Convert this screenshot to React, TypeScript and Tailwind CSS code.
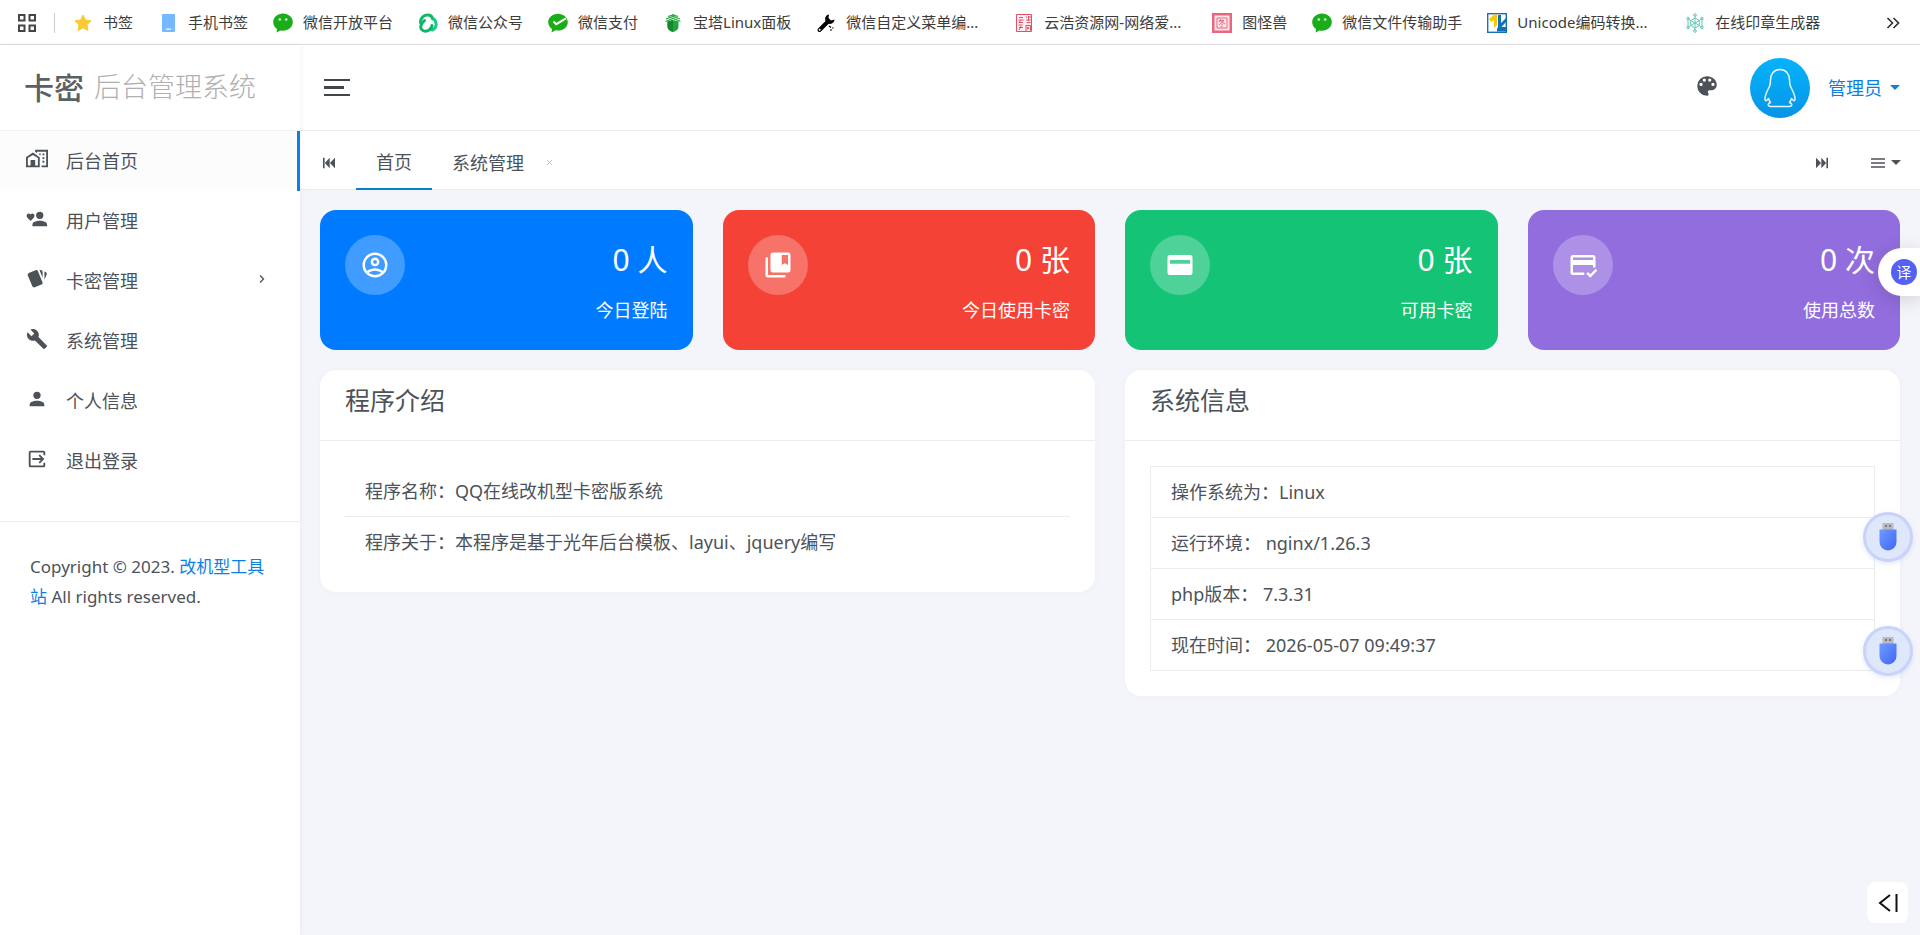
import type { ReactNode } from "react"

// Single-path icons on a 24x24 grid.
const ICONS = {
  cards:
    "M21.47,4.35L20.13,3.79V12.82L22.56,6.96C22.97,5.94 22.5,4.77 21.47,4.35M1.97,8.05L6.93,20C7.24,20.77 7.97,21.24 8.74,21.26C9,21.26 9.27,21.21 9.53,21.1L16.9,18.05C17.65,17.74 18.11,17 18.13,16.26C18.14,16 18.09,15.71 18,15.45L13,3.5C12.71,2.73 11.97,2.26 11.19,2.25C10.93,2.25 10.67,2.31 10.42,2.4L3.06,5.45C2.04,5.87 1.55,7.04 1.97,8.05M18.12,4.25A2,2 0 0,0 16.12,2.25H14.67L18.12,10.59",
  wrench:
    "M22.7,19L13.6,9.9C14.5,7.6 14,4.9 12.1,3C10.1,1 7.1,0.6 4.7,1.7L9,6L6,9L1.6,4.7C0.4,7.1 0.9,10.1 2.9,12.1C4.8,14 7.5,14.5 9.8,13.6L18.9,22.7C19.3,23.1 19.9,23.1 20.3,22.7L22.6,20.4C23.1,20 23.1,19.3 22.7,19Z",
  account:
    "M12,4A4,4 0 0,1 16,8A4,4 0 0,1 12,12A4,4 0 0,1 8,8A4,4 0 0,1 12,4M12,14C16.42,14 20,15.79 20,18V20H4V18C4,15.79 7.58,14 12,14Z",
  accountHeart:
    "M15,4A4,4 0 0,1 19,8A4,4 0 0,1 15,12A4,4 0 0,1 11,8A4,4 0 0,1 15,4M15,14C19.42,14 23,15.79 23,18V20H7V18C7,15.79 10.58,14 15,14M5,14L4.4,13.5C2.2,11.5 0.7,10.2 0.7,8.5C0.7,7.2 1.8,6.1 3.1,6.1C3.8,6.1 4.5,6.4 5,7C5.5,6.4 6.2,6.1 6.9,6.1C8.2,6.1 9.3,7.2 9.3,8.5C9.3,10.2 7.8,11.5 5.6,13.5L5,14Z",
  home:
    "M10,2V4.26L12,5.59V4H22V19H17V21H24V2H10M7.5,5L0,10V21H15V10L7.5,5M14,6V6.93L15.61,8H16V6H14M18,6V8H20V6H18M7.5,7.5L13,11V19H10V13H5V19H2V11L7.5,7.5M18,10V12H20V10H18M18,14V16H20V14H18Z",
  exit:
    "M5,3H19A2,2 0 0,1 21,5V8H19V5H5V19H19V16H21V19A2,2 0 0,1 19,21H5A2,2 0 0,1 3,19V5A2,2 0 0,1 5,3M15.1,7.1L20,12L15.1,16.9L13.7,15.5L16.2,13H7V11H16.2L13.7,8.5Z",
  palette:
    "M17.5,12A1.5,1.5 0 0,1 16,10.5A1.5,1.5 0 0,1 17.5,9A1.5,1.5 0 0,1 19,10.5A1.5,1.5 0 0,1 17.5,12M14.5,8A1.5,1.5 0 0,1 13,6.5A1.5,1.5 0 0,1 14.5,5A1.5,1.5 0 0,1 16,6.5A1.5,1.5 0 0,1 14.5,8M9.5,8A1.5,1.5 0 0,1 8,6.5A1.5,1.5 0 0,1 9.5,5A1.5,1.5 0 0,1 11,6.5A1.5,1.5 0 0,1 9.5,8M6.5,12A1.5,1.5 0 0,1 5,10.5A1.5,1.5 0 0,1 6.5,9A1.5,1.5 0 0,1 8,10.5A1.5,1.5 0 0,1 6.5,12M12,3A9,9 0 0,0 3,12A9,9 0 0,0 12,21A1.5,1.5 0 0,0 13.5,19.5C13.5,19.11 13.35,18.76 13.11,18.5C12.88,18.23 12.73,17.88 12.73,17.5A1.5,1.5 0 0,1 14.23,16H16A5,5 0 0,0 21,11C21,6.58 16.97,3 12,3Z",
  accountCircle:
    "M12,2A10,10 0 0,0 2,12A10,10 0 0,0 12,22A10,10 0 0,0 22,12A10,10 0 0,0 12,2M7.07,18.28C7.5,17.38 10.12,16.5 12,16.5C13.88,16.5 16.5,17.38 16.93,18.28C15.57,19.36 13.86,20 12,20C10.14,20 8.43,19.36 7.07,18.28M18.36,16.83C16.93,15.09 13.46,14.5 12,14.5C10.54,14.5 7.07,15.09 5.64,16.83C4.62,15.5 4,13.82 4,12C4,7.59 7.59,4 12,4C16.41,4 20,7.59 20,12C20,13.82 19.38,15.5 18.36,16.83M12,6C10.06,6 8.5,7.56 8.5,9.5C8.5,11.44 10.06,13 12,13C13.94,13 15.5,11.44 15.5,9.5C15.5,7.56 13.94,6 12,6M12,11A1.5,1.5 0 0,1 10.5,9.5A1.5,1.5 0 0,1 12,8A1.5,1.5 0 0,1 13.5,9.5A1.5,1.5 0 0,1 12,11Z",
  books:
    "M4,6H2V20A2,2 0 0,0 4,22H18V20H4V6M8,2A2,2 0 0,0 6,4V16A2,2 0 0,0 8,18H20A2,2 0 0,0 22,16V4A2,2 0 0,0 20,2H8M15,4H20V12L17.5,10.5L15,12V4Z",
  card:
    "M20,4H4A2,2 0 0,0 2,6V18A2,2 0 0,0 4,20H20A2,2 0 0,0 22,18V6A2,2 0 0,0 20,4M20,11H4V8H20V11Z",
  cardCheck:
    "M4,4H20A2,2 0 0,1 22,6V14H20V12H4V18H13V20H4A2,2 0 0,1 2,18V6A2,2 0 0,1 4,4M4,6V8H20V6H4M17.8,22.2L14.6,19L16,17.6L17.8,19.4L22.2,15L23.4,16.4L17.8,22.2Z",
  skipStart: "M3,4H5.4V20H3V4M13,4V20L5.8,12L13,4M21,4V20L13.4,12L21,4Z",
  skipEnd: "M21,4H18.6V20H21V4M11,4V20L18.2,12L11,4M3,4V20L10.6,12L3,4Z",
}

type IconName = keyof typeof ICONS

function Icon({ name, className }: { name: IconName; className?: string }) {
  return (
    <svg viewBox="0 0 24 24" fill="currentColor" fillRule="evenodd" className={className} aria-hidden>
      <path d={ICONS[name]} />
    </svg>
  )
}

function Caret() {
  return (
    <svg viewBox="0 0 10 5" fill="currentColor" className="h-[5px] w-[10px]" aria-hidden>
      <path d="M0 0H10L5 5Z" />
    </svg>
  )
}

// ---- bookmark favicons ----

const wechat = (
  <svg viewBox="0 0 20 20" className="size-5">
    <path d="M10 .5C4.6.5.2 4.2.2 9c0 3 1.5 5.4 3.8 7L3.6 19.5 7.4 17.4c.8.2 1.7.3 2.600.3 5.400 0 9.800-3.800 9.800-8.700S15.400.5 10 .5Z" fill="#1aad19" />
    <circle cx="6.8" cy="6.5" r="1.3" fill="#d8f5d6" />
    <circle cx="13.2" cy="6.5" r="1.3" fill="#d8f5d6" />
  </svg>
)

const star = (
  <svg viewBox="0 0 20 20" className="size-5">
    <path d="M10 2l2.5 5 5.500.8-4 4 1 5.700-5-2.700-5 2.700 1-5.700-4-4L7.500 7Z" fill="#fcc934" stroke="#fcc934" strokeWidth="1" strokeLinejoin="round" />
  </svg>
)

const phone = (
  <svg viewBox="0 0 20 20" className="size-5">
    <rect x="4" y="1" width="13" height="18" rx="1" fill="#74b9ff" />
    <rect x="8" y="15.5" width="5" height="1.2" fill="#fff" />
  </svg>
)

// Three interlocking arms, each a third of a turn from the last.
const official = (
  <svg viewBox="0 0 20 20" className="size-5" fill="none" strokeWidth="3" strokeLinecap="round">
    <path d="M2.500 9.500C2.500 4.500 6.500 1.500 10.500 2c2.500.3 3.800 2 4.200 4" stroke="#12b76a" />
    <path d="M16 6c3.500 4 2.500 9-1.500 11" stroke="#19c98a" />
    <path d="M14 12.500C13.500 16.500 9 19.500 5 17.500 1.500 15.500 2 11.500 6.500 7.500" stroke="#0fb567" />
  </svg>
)

const pay = (
  <svg viewBox="0 0 20 20" className="size-5">
    <path d="M10 .8C4.600.8.2 4.500.2 9.200c0 2.800 1.500 5.200 3.800 6.700L3.600 19.400l3.800-2.100c.8.200 1.700.3 2.600.3 5.400 0 9.800-3.700 9.800-8.400S15.400.8 10 .8Z" fill="#1aad19" />
    <path d="M5.500 8.500l2.800 2.700L18 5.300" stroke="#fff" strokeWidth="2" fill="none" />
  </svg>
)

const pagoda = (
  <svg viewBox="0 0 20 20" className="size-5">
    <path d="M10 1v2M5 3.500L10 2l5 1.500M3 6l7-2.500L17 6M2.500 8.500L10 5.500l7.500 3" stroke="#20a53a" strokeWidth="1.200" fill="none" />
    <path d="M4.500 8.500L10 7l5.500 1.500V14c0 2.500-2.500 4-5.500 5-3-1-5.500-2.500-5.500-5Z" fill="#20a53a" />
    <path d="M4.500 8.500L10 7v12c-3-1-5.500-2.500-5.500-5Z" fill="#158a2c" />
  </svg>
)

const wrenchMark = (
  <svg viewBox="0 0 20 20" className="size-5">
    <path d="M3.500 17L12 8.500" stroke="#000" strokeWidth="4" strokeLinecap="round" />
    <path d="M9.500 8C8.500 4.500 10 2 13 1.500L12.500 5l2.500 2.500 3.500-1C18.500 9.500 15.500 12 12 10.500Z" fill="#000" />
    <circle cx="3.700" cy="16.800" r="1" fill="#fff" />
    <path d="M13 13l2 1.500M16.500 14.500l.8.800M14 17h2" stroke="#000" strokeWidth="1.200" />
  </svg>
)

const redSeal = (
  <svg viewBox="0 0 20 20" className="size-5" fill="none" stroke="#e0506a">
    <path d="M2.500 1.500h15v17h-15Z" fill="#fdeef1" />
    <path d="M5 4.500h4M4.500 7h5M7 7L5 9.500h4M12 3.500l1 1.500M14 4h3M12 7h5M14.500 3v5M12.500 9.500h4M4.500 12h4M5 14.500h4M5 17l2-4M11.500 12.500h5v5M12 13v5M13 14l2 2.500M15 14l-2 2.500" />
  </svg>
)

const redBox = (
  <svg viewBox="0 0 20 20" className="size-5" fill="none">
    <rect width="20" height="20" fill="#e8677c" />
    <rect x="2.500" y="2.500" width="15" height="15" fill="#fde6ea" />
    <path d="M5 5h10v10H5ZM8.500 6L7 9M8 7.500h4L7 12M8.500 8.500L13 11M9.500 11.500l1.500.7M8.500 13.300l2 .7" stroke="#e8677c" strokeWidth="1" />
  </svg>
)

const unicode = (
  <svg viewBox="0 0 20 20" className="size-5">
    <rect x=".7" y=".7" width="18.600" height="18.600" fill="#fff" stroke="#1272b5" strokeWidth="1.400" />
    <path d="M2 6l5-4.500h3V12l-3 3V7L4 9Z" fill="#f9c80e" />
    <path d="M11 9V2h3v8l5-5v4L14.500 14H19v4.500h-9V16l1-2Z" fill="#1272b5" />
  </svg>
)

const snow = (
  <svg viewBox="0 0 20 20" className="size-5" fill="none" stroke="#66c9b8" strokeWidth="1">
    <path d="M10 5l4.300 2.500v5L10 15l-4.300-2.500v-5ZM10 5v10M5.700 7.500l8.600 5M14.300 7.500l-8.600 5M5.700 7.500L3 5.500M14.300 7.500L17 5.500M5.700 12.500L3 14.500M14.300 12.500l2.700 2M10 5V2M10 15v3M3 5.500v9M17 5.500v9" />
    <circle cx="10" cy="2" r="1.300" />
    <circle cx="10" cy="18" r="1.300" />
    <circle cx="3" cy="5.500" r="1.300" />
    <circle cx="17" cy="5.500" r="1.300" />
    <circle cx="3" cy="14.500" r="1.300" />
    <circle cx="17" cy="14.500" r="1.300" />
  </svg>
)

const BOOKMARKS: { icon: ReactNode; label: string; clipped?: boolean }[] = [
  { icon: star, label: "书签" },
  { icon: phone, label: "手机书签" },
  { icon: wechat, label: "微信开放平台" },
  { icon: official, label: "微信公众号" },
  { icon: pay, label: "微信支付" },
  { icon: pagoda, label: "宝塔Linux面板" },
  { icon: wrenchMark, label: "微信自定义菜单编...", clipped: true },
  { icon: redSeal, label: "云浩资源网-网络爱...", clipped: true },
  { icon: redBox, label: "图怪兽" },
  { icon: wechat, label: "微信文件传输助手" },
  { icon: unicode, label: "Unicode编码转换...", clipped: true },
  { icon: snow, label: "在线印章生成器" },
]

function BookmarkBar() {
  return (
    <nav className="flex h-[45px] items-center border-b border-[#dcdcdc] bg-white pt-px pr-5 pl-[18px] text-[15px] text-[#3c3c3c]">
      <button type="button" aria-label="应用" className="text-[#444]">
        <svg viewBox="0 0 18 18" className="size-[18px]" fill="none" stroke="currentColor" strokeWidth="2">
          <path d="M1 1h5.500v5.500H1ZM11.500 1H17v5.500h-5.500ZM1 11.500h5.500V17H1ZM11.500 11.500H17V17h-5.500Z" />
        </svg>
      </button>
      <span className="mx-[18px] h-5 w-px bg-[#ccc]" />
      <ul className="flex min-w-0 flex-1 items-center gap-[25px] overflow-hidden">
        {BOOKMARKS.map((b) => (
          <li key={b.label} className="shrink-0">
            <a href="#" className="flex items-center gap-[10px] whitespace-nowrap">
              {b.icon}
              <span className={b.clipped ? "w-[143px]" : ""}>{b.label}</span>
            </a>
          </li>
        ))}
      </ul>
      <button type="button" aria-label="更多书签" className="text-[#333]">
        <svg viewBox="0 0 14 12" className="h-3 w-[14px]" fill="none" stroke="currentColor" strokeWidth="1.700">
          <path d="M1.500 1l5 5-5 5M7.500 1l5 5-5 5" />
        </svg>
      </button>
    </nav>
  )
}

const MENU: { icon: IconName; label: string; active?: boolean; nested?: boolean }[] = [
  { icon: "home", label: "后台首页", active: true },
  { icon: "accountHeart", label: "用户管理" },
  { icon: "cards", label: "卡密管理", nested: true },
  { icon: "wrench", label: "系统管理" },
  { icon: "account", label: "个人信息" },
  { icon: "exit", label: "退出登录" },
]

function Sidebar() {
  return (
    <aside className="z-10 w-[300px] shrink-0 bg-white shadow-[0_0_6px_rgba(0,0,0,0.06)]">
      <a href="#" className="flex h-[86px] items-center gap-[10px] border-b border-[#f0f0f0] px-6">
        <span className="text-[30px] font-medium text-[#5c5f63]">卡密</span>
        <span className="text-[27px] font-light text-[#b0b0b0]">后台管理系统</span>
      </a>
      <ul>
        {MENU.map((m) => (
          <li key={m.label}>
            <a
              href="#"
              className={
                "flex h-[60px] items-center gap-[18px] border-r-[3px] pr-8 pl-[26px] text-lg " +
                (m.active ? "border-[#0a7fe6] bg-[#fcfcfd]" : "border-transparent")
              }
            >
              <Icon name={m.icon} className="mb-1 size-[22px]" />
              <span className="flex-1">{m.label}</span>
              {m.nested && (
                <svg viewBox="0 0 6 8" className="mb-1 h-2 w-[6px]" fill="none" stroke="currentColor" strokeWidth="1.300">
                  <path d="M1 .5L4.500 4 1 7.500" />
                </svg>
              )}
            </a>
          </li>
        ))}
      </ul>
      <p className="mt-[30px] border-t border-[#ececec] px-[30px] py-[30px] text-[17px] leading-[30px]">
        Copyright © 2023.{" "}
        <a href="#" className="text-[#0a7fe6]">
          改机型工具站
        </a>{" "}
        All rights reserved.
      </p>
    </aside>
  )
}

function Avatar() {
  return (
    <svg viewBox="0 0 60 60" className="size-[60px]" aria-hidden>
      <defs>
        <linearGradient id="avatar" x1="0" y1="0" x2="0" y2="1">
          <stop offset="0" stopColor="#04b3fb" />
          <stop offset="1" stopColor="#0794e6" />
        </linearGradient>
      </defs>
      <circle cx="30" cy="30" r="30" fill="url(#avatar)" />
      <path
        d="M30 11.500C24 11.500 20.500 16 20.500 22C20.500 25 20.300 26.500 19.500 28.500C17.500 32.500 15 36.500 15 40.500C15 43.500 16 43.500 18.500 40.500C19 42.500 19.500 43.500 20.500 44.500C18.500 45.200 18 46 18.200 47C18.500 48.300 19.500 48.500 21 48.500H39C40.500 48.500 41.500 48.300 41.800 47C42 46 41.500 45.200 39.500 44.500C40.500 43.500 41 42.500 41.500 40.500C44 43.500 45 43.500 45 40.500C45 36.500 42.500 32.500 40.500 28.500C39.700 26.500 39.500 25 39.500 22C39.500 16 36 11.500 30 11.500Z"
        fill="none"
        stroke="#e8f7ff"
        strokeWidth="1.500"
        strokeLinejoin="round"
      />
    </svg>
  )
}

function TopBar() {
  return (
    <header className="flex h-[86px] items-center border-b border-[#ececec] bg-white pr-5 pl-6">
      <button type="button" aria-label="折叠菜单" className="flex flex-col gap-[5px]">
        <span className="h-[2px] w-[26px] bg-[#43474b]" />
        <span className="h-[3px] w-5 bg-[#43474b]" />
        <span className="h-[2px] w-[26px] bg-[#43474b]" />
      </button>
      <button type="button" aria-label="主题" className="mr-[30px] mb-1 ml-auto">
        <Icon name="palette" className="size-[26px]" />
      </button>
      <button type="button" className="flex items-center gap-2 text-lg text-[#0a7fe6]">
        <span className="mr-[10px]">
          <Avatar />
        </span>
        管理员
        <Caret />
      </button>
    </header>
  )
}

function TabBar() {
  return (
    <div className="flex h-[59px] items-center border-b border-[#ececec] bg-white pr-[19px] pl-[21px] text-lg *:pt-[5px]">
      <button type="button" aria-label="向左滚动" className="mr-[19px]">
        <Icon name="skipStart" className="size-4" />
      </button>
      <a href="#" className="-mb-px flex h-[59px] items-center border-b-2 border-[#0a7fc8] px-5">
        首页
      </a>
      <a href="#" className="flex h-full items-center px-5">
        系统管理
      </a>
      <button type="button" aria-label="关闭" className="text-[#b5b5b5]">
        <svg viewBox="0 0 8 8" className="mx-0.5 size-[7px]" fill="none" stroke="currentColor">
          <path d="M1 1l6 6M7 1L1 7" />
        </svg>
      </button>
      <button type="button" aria-label="向右滚动" className="mr-[41px] ml-auto">
        <Icon name="skipEnd" className="size-4" />
      </button>
      <button type="button" aria-label="页签操作" className="flex items-center gap-[6px]">
        <svg viewBox="0 0 14 10" className="h-[10px] w-[14px]" stroke="currentColor" strokeWidth="1.400">
          <path d="M0 1h14M0 5h14M0 9h14" />
        </svg>
        <Caret />
      </button>
    </div>
  )
}

const STATS: { icon: IconName; value: string; label: string; color: string }[] = [
  { icon: "accountCircle", value: "0 人", label: "今日登陆", color: "bg-[#007bff]" },
  { icon: "books", value: "0 张", label: "今日使用卡密", color: "bg-[#f44336]" },
  { icon: "card", value: "0 张", label: "可用卡密", color: "bg-[#15c377]" },
  { icon: "cardCheck", value: "0 次", label: "使用总数", color: "bg-[#926dde]" },
]

function StatCard({ icon, value, label, color }: (typeof STATS)[number]) {
  return (
    <section className={"flex h-[140px] items-start justify-between rounded-2xl p-[25px] text-white " + color}>
      <span className="flex size-[60px] items-center justify-center rounded-full bg-white/25">
        <Icon name={icon} className="size-[30px]" />
      </span>
      <div className="text-right">
        <p className="text-[30px] leading-[50px]">{value}</p>
        <p className="text-lg leading-[50px]">{label}</p>
      </div>
    </section>
  )
}

function Panel({ title, children }: { title: string; children: ReactNode }) {
  return (
    <section className="rounded-2xl bg-white shadow-[0_0_6px_rgba(0,0,0,0.03)]">
      <h2 className="border-b border-[#ececec] px-[25px] pt-[10px] pb-5 text-[25px] leading-[40px]">{title}</h2>
      <div className="p-[25px]">{children}</div>
    </section>
  )
}

const SYSTEM_INFO = ["操作系统为：Linux", "运行环境： nginx/1.26.3", "php版本： 7.3.31", "现在时间： 2026-05-07 09:49:37"]

function UsbButton() {
  return (
    <button
      type="button"
      aria-label="U盘"
      className="flex size-[50px] items-center justify-center rounded-full border-[3px] border-[#c9d2fb] bg-[#dfe7fb] shadow-[0_2px_5px_rgba(90,110,240,0.15)]"
    >
      <svg viewBox="0 0 18 30" className="h-[30px] w-[18px]">
        <defs>
          <linearGradient id="usb" x1="0" y1="0" x2="1" y2="1">
            <stop offset="0" stopColor="#6f9bff" />
            <stop offset="1" stopColor="#3f66f5" />
          </linearGradient>
        </defs>
        <rect x="3.500" y="1" width="11" height="8" fill="#b9b9c2" />
        <rect x="6" y="3" width="2" height="2" fill="#77777f" />
        <rect x="10" y="3" width="2" height="2" fill="#77777f" />
        <path d="M.5 7.500h17V20a8.500 8.500 0 0 1-17 0Z" fill="url(#usb)" />
      </svg>
    </button>
  )
}

export default function App() {
  return (
    <div className="flex min-h-screen flex-col bg-[#f4f5fa] font-['Noto_Sans','Noto_Sans_CJK_SC',sans-serif] text-[#4d5259]">
      <BookmarkBar />
      <div className="flex flex-1">
        <Sidebar />
        <div className="min-w-0 flex-1">
          <TopBar />
          <TabBar />
          <main className="p-5">
            <div className="grid grid-cols-4 gap-x-[30px]">
              {STATS.map((s) => (
                <StatCard key={s.icon} {...s} />
              ))}
            </div>
            <div className="mt-5 grid grid-cols-2 items-start gap-x-[30px]">
              <Panel title="程序介绍">
                <ul className="text-lg leading-[50px]">
                  <li className="border-b border-[#ececec] px-5">程序名称：QQ在线改机型卡密版系统</li>
                  <li className="px-5">程序关于：本程序是基于光年后台模板、layui、jquery编写</li>
                </ul>
              </Panel>
              <Panel title="系统信息">
                <ul className="border border-b-0 border-[#ececec] text-lg leading-[50px]">
                  {SYSTEM_INFO.map((line) => (
                    <li key={line} className="border-b border-[#ececec] px-5">
                      {line}
                    </li>
                  ))}
                </ul>
              </Panel>
            </div>
          </main>
        </div>
      </div>

      {/* Floating tools pinned to the right edge */}
      <button
        type="button"
        aria-label="翻译"
        className="fixed top-[248px] right-0 z-20 flex h-12 w-[42px] items-center justify-end rounded-l-full bg-white pr-[3px] shadow-[0_4px_20px_rgba(0,0,0,0.15)]"
      >
        <span className="flex size-[26px] items-center justify-center rounded-full bg-[#5561f5] text-[15px] text-white">译</span>
      </button>
      <div className="fixed top-[512px] right-[7px] z-20 flex flex-col gap-16">
        <UsbButton />
        <UsbButton />
      </div>
      <button
        type="button"
        aria-label="展开侧栏"
        className="fixed right-3 bottom-3 z-20 flex size-[41px] items-center justify-center rounded-lg bg-white"
      >
        <svg viewBox="0 0 20 20" className="size-5" fill="none" stroke="#111" strokeWidth="2">
          <path d="M12 2L2 10l10 8M18.500 1v18" />
        </svg>
      </button>
    </div>
  )
}
